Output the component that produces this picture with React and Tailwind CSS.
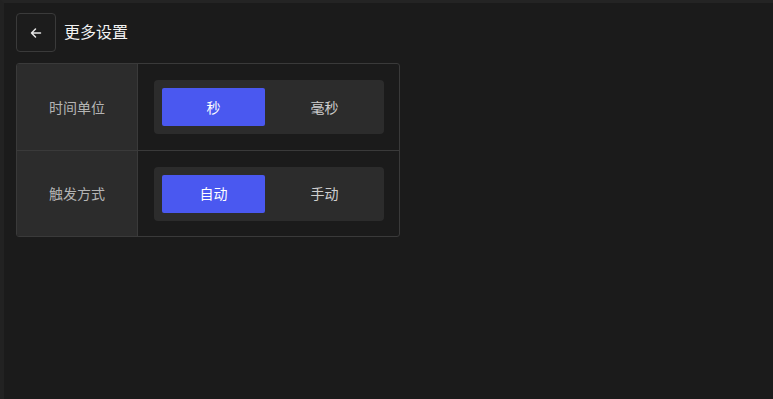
export default function App() {
    const rows = [
        { label: '时间单位', options: ['秒', '毫秒'] },
        { label: '触发方式', options: ['自动', '手动'] },
    ];

    return (
        <div
            className="w-[773px] h-[399px] bg-[#1b1b1b] border-t-[3px] border-t-[#242424] border-l-[4px] border-l-[#222222] text-[#e6e6e6] overflow-hidden"
            style={{ fontFamily: '"Noto Sans CJK SC", "Noto Sans", sans-serif' }}
        >
            <div className="pl-[12px] pt-[10px]">
                {/* Header */}
                <div className="flex items-center gap-[8px]">
                    <button className="w-[40px] h-[39px] flex items-center justify-center rounded-[4px] border border-[#3a3a3a] bg-[#1c1c1c]">
                        <svg width="12" height="12" viewBox="0 0 12 12" fill="none" stroke="#e8e8e8" strokeWidth="1.5" strokeLinecap="round" strokeLinejoin="round">
                            <path d="M10.5 6H1.5M5.5 2L1.5 6l4 4" />
                        </svg>
                    </button>
                    <h1 className="text-[16px] leading-[20px] mb-[3px] font-normal text-[#f2f2f2]">更多设置</h1>
                </div>

                {/* Settings table */}
                <div className="mt-[11px] w-[384px] border border-[#3a3a3a] rounded-[3px] overflow-hidden">
                    {rows.map((row, i) => (
                        <div key={row.label} className={`flex h-[86px] ${i > 0 ? 'border-t border-[#3a3a3a]' : ''}`}>
                            <div className="w-[121px] bg-[#2c2c2c] border-r border-[#3a3a3a] flex items-center justify-center text-[14px] text-[#b4b4b4]">
                                {row.label}
                            </div>
                            <div className="flex-1 flex items-center pl-[16px]">
                                <div className="flex w-[230px] h-[54px] py-[8px] pl-[8px] bg-[#2c2c2c] rounded-[4px]">
                                    {row.options.map((opt, j) => (
                                        <div
                                            key={opt}
                                            className={`flex items-center justify-center text-[14px] rounded-[2px] ${j === 0 ? 'w-[103px] bg-[#4a58f0] text-white' : 'flex-1 text-[#cfcfcf]'}`}
                                        >
                                            {opt}
                                        </div>
                                    ))}
                                </div>
                            </div>
                        </div>
                    ))}
                </div>
            </div>
        </div>
    );
}
